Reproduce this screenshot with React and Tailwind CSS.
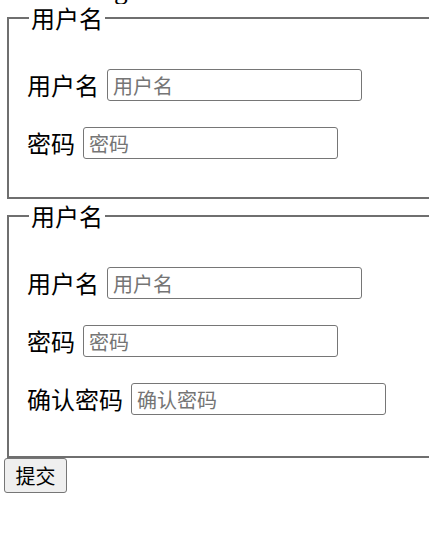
import React from 'react';

const font = { fontFamily: '"Noto Sans CJK SC", "Noto Sans", sans-serif' };

const Row = ({ label }) => (
  <div className="flex items-center gap-2 h-8 -ml-[2px]">
    <label className="text-[24px] leading-8 text-black whitespace-nowrap">{label}</label>
    <input
      type="text"
      placeholder={label}
      className="w-[255px] h-8 border border-[#767676] rounded-[3px] px-[5px] text-[20px] text-black placeholder:text-[#757575] bg-white outline-none"
    />
  </div>
);

const Group = ({ fields, bottom }) => (
  <fieldset className={`ml-[7px] w-[470px] border-2 border-[#6f6f6f] pl-[20px] pt-[37px] ${bottom}`}>
    <legend className="px-[2px] text-[24px] leading-[28px] text-black">用户名</legend>
    <div className="flex flex-col gap-[26px]">
      {fields.map((f) => (
        <Row key={f} label={f} />
      ))}
    </div>
  </fieldset>
);

export default function App() {
  return (
    <div className="w-[429px] h-[548px] overflow-hidden bg-white" style={font}>
      <div className="h-1 overflow-hidden">
        <p className="-mt-[23px] pl-[114px] text-[24px] leading-[24px] text-black">g</p>
      </div>
      <form onSubmit={(e) => e.preventDefault()}>
        <Group fields={['用户名', '密码']} bottom="pb-[38px]" />
        <div className="h-[3px]" />
        <Group fields={['用户名', '密码', '确认密码']} bottom="pb-[41px]" />
        <button
          type="submit"
          className="ml-[4px] w-[63px] h-[35px] border border-[#767676] rounded-[3px] bg-[#efefef] text-[20px] text-black"
        >
          提交
        </button>
      </form>
    </div>
  );
}
